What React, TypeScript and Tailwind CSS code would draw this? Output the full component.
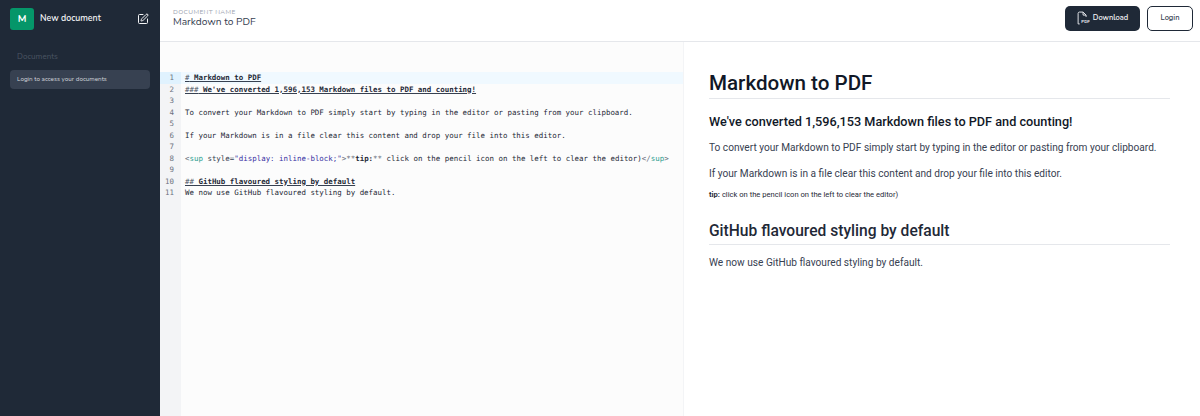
import type { ReactNode } from 'react';
import { SquarePen } from 'lucide-react';

function Heading({ hash, text }: { hash: string; text: string }) {
  return (
    <span className="underline decoration-[#374151]">
      <span className="text-[#4b5563]">{hash}</span>
      <span className="font-bold text-[#1f2937]">{text}</span>
    </span>
  );
}

const lines: ReactNode[] = [
  <Heading hash="#" text=" Markdown to PDF" />,
  <Heading hash="###" text=" We've converted 1,596,153 Markdown files to PDF and counting!" />,
  '',
  'To convert your Markdown to PDF simply start by typing in the editor or pasting from your clipboard.',
  '',
  'If your Markdown is in a file clear this content and drop your file into this editor.',
  '',
  <>
    <span className="text-[#6b7280]">&lt;</span>
    <span className="text-[#2a9d8f]">sup</span> <span className="text-[#374151]">style=</span>
    <span className="text-[#3730a3]">"display: inline-block;"</span>
    <span className="text-[#6b7280]">&gt;**</span>
    <span className="font-bold">tip:</span>
    <span className="text-[#6b7280]">**</span> click on the pencil icon on the left to clear the editor)
    <span className="text-[#6b7280]">&lt;/</span>
    <span className="text-[#2a9d8f]">sup</span>
    <span className="text-[#6b7280]">&gt;</span>
  </>,
  '',
  <Heading hash="##" text=" GitHub flavoured styling by default" />,
  'We now use GitHub flavoured styling by default.',
];

function PdfFileIcon() {
  return (
    <svg width="13" height="14" viewBox="0 0 12 13" fill="none" stroke="#e5e7eb" strokeWidth="0.9">
      <path d="M1 12V2.2C1 1.5 1.5 1 2.2 1H5.6L8.4 3.8V5.5" />
      <path d="M5.6 1V3.8H8.4" />
      <path d="M1 12H2.5" />
      <text x="4" y="11.5" fontSize="4" fontWeight="700" fill="#e5e7eb" stroke="none" fontFamily="'Liberation Sans',sans-serif">PDF</text>
    </svg>
  );
}

export default function App() {
  return (
    <div className="flex h-[416px] w-[1200px] overflow-hidden bg-white font-['Nunito','Open_Sans',sans-serif]">
      <aside className="flex w-[160px] shrink-0 flex-col bg-[#1f2937] px-[10px]">
        <div className="flex h-[38px] items-center">
          <div className="flex h-[22px] w-[24px] items-center justify-center rounded-[3px] bg-[#059669] text-[10px] font-bold text-white">M</div>
          <span className="ml-[6px] flex-1 text-[8.8px] font-semibold text-[#f3f4f6]">New document</span>
          <SquarePen size={12} className="mr-[1px] text-[#f3f4f6]" strokeWidth={2} />
        </div>
        <div className="mt-[14px] pl-[7px] text-[8px] leading-[10px] text-[#4b5563]">Documents</div>
        <div className="mt-[8px] flex h-[19px] items-center rounded-[4px] bg-[#374151] px-[7px] text-[6.3px] text-[#d1d5db]">Login to access your documents</div>
      </aside>
      <main className="flex min-w-0 flex-1 flex-col">
        <header className="flex h-[42px] shrink-0 items-center border-b border-[#e5e7eb] pb-[5px] pl-[13px] pr-[7px]">
          <div className="flex-1">
            <div className="text-[6.5px] leading-[8px] tracking-[0.06em] text-[#9ca3af]">DOCUMENT NAME</div>
            <div className="text-[10.2px] leading-[12px] text-[#374151]">Markdown to PDF</div>
          </div>
          <button className="flex h-[25px] w-[75px] items-center justify-center gap-[3px] rounded-[5px] bg-[#1f2937] text-[7.5px] font-semibold text-[#f3f4f6]">
            <PdfFileIcon />
            Download
          </button>
          <button className="ml-[7px] h-[25px] w-[46px] rounded-[5px] border-[1.5px] border-[#1f2937] bg-white text-[7.5px] font-semibold text-[#374151]">Login</button>
        </header>
        <div className="flex min-h-0 flex-1">
          <section className="flex w-[524px] shrink-0 flex-col border-r border-[#f3f4f6] bg-[#fcfcfc]">
            <div className="flex min-h-0 flex-1 pt-[30px] font-['DejaVu_Sans_Mono',monospace] text-[7.45px] leading-[11.5px] text-[#1f2937]">
              <div className="flex w-full flex-col">
                {lines.map((line, i) => (
                  <div key={i} className={`flex h-[11.5px] ${i === 0 ? 'bg-[#f0f9ff]' : ''}`}>
                    <div className={`w-[21px] shrink-0 pr-[7px] text-right text-[#6b7280] ${i === 0 ? 'bg-[#e0f2fe]' : 'bg-[#f3f4f6]'}`}>{i + 1}</div>
                    <div className="whitespace-pre pl-[4px]">{line}</div>
                  </div>
                ))}
                <div className="w-[21px] flex-1 bg-[#f3f4f6]" />
              </div>
            </div>
          </section>
          <section className="flex-1 pl-[25px] pr-[30px] pt-[27px] font-['Roboto',sans-serif] text-[#374151]">
            <h1 className="border-b border-[#e5e7eb] pb-[1px] text-[20.6px] font-medium leading-[28px] text-[#111827]">Markdown to PDF</h1>
            <h3 className="mt-[14px] text-[12.7px] font-medium leading-[18px] text-[#111827]">We've converted 1,596,153 Markdown files to PDF and counting!</h3>
            <p className="mt-[8px] text-[10.15px] leading-[17px]">To convert your Markdown to PDF simply start by typing in the editor or pasting from your clipboard.</p>
            <p className="mt-[9px] text-[10.15px] leading-[17px]">If your Markdown is in a file clear this content and drop your file into this editor.</p>
            <p className="mt-[7.5px] text-[7.6px] leading-[10px] text-[#1f2937]"><strong>tip:</strong> click on the pencil icon on the left to clear the editor)</p>
            <h2 className="mt-[20px] border-b border-[#e5e7eb] pb-[2px] text-[15.6px] font-medium leading-[22px] text-[#1f2937]">GitHub flavoured styling by default</h2>
            <p className="mt-[9.5px] text-[10.15px] leading-[17px]">We now use GitHub flavoured styling by default.</p>
          </section>
        </div>
      </main>
    </div>
  );
}
